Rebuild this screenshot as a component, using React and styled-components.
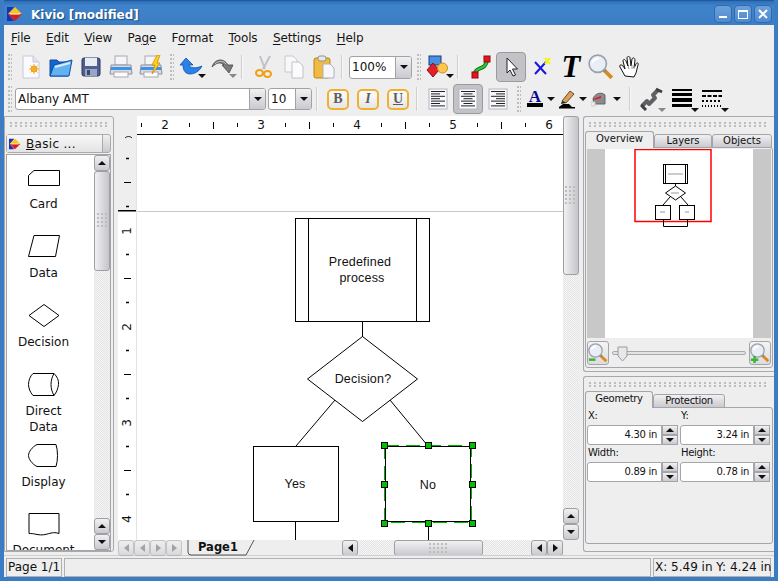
import styled, { createGlobalStyle } from "styled-components";

const GlobalStyle = createGlobalStyle`
  html, body { margin: 0; padding: 0; background: #eeeeee; }
  * { box-sizing: border-box; }
  body { font-family: "DejaVu Sans", sans-serif; font-size: 12px; color: #111; }
`;

const SCROLL_BG = "linear-gradient(#f1f1f3, #c9c9cf)";
const DOTS = "radial-gradient(circle at 1px 1px, #bdbdbd 1px, transparent 1.2px)";

const Win = styled.div`
  width: 778px;
  height: 581px;
  display: flex;
  flex-direction: column;
  background: #eeeeee;
  border: 4px solid #3b7cc2;
  border-top: 0;
  overflow: hidden;
`;

const TitleBar = styled.div`
  height: 25px;
  margin: 0 -4px;
  padding: 1px 6px 0 7px;
  flex: none;
  display: flex;
  align-items: center;
  background: linear-gradient(#2f6fb7, #3f83cb 20%, #3c7ec6);
  border-top: 1px solid #1f5a9e;
`;

const TitleText = styled.span`
  margin-left: 8px;
  padding-top: 2px;
  flex: 1;
  color: #fff;
  font-weight: bold;
  font-size: 12px;
  text-shadow: 1px 1px 1px #1c4a80;
`;

const WinBtn = styled.span`
  width: 18px;
  height: 18px;
  margin-left: 2px;
  display: flex;
  align-items: center;
  justify-content: center;
  background: linear-gradient(#6ba0da, #4f8ad0);
  border: 1px solid #2f6aad;
  border-radius: 4px;
`;

const MenuBar = styled.div`
  height: 25px;
  flex: none;
  display: flex;
  align-items: center;
  padding: 0 0 0 7px;
  gap: 15.4px;
`;

const MenuItem = styled.span`
  font-size: 12px;
  letter-spacing: -0.12px;
  color: #161616;
  u { text-decoration-thickness: 1px; text-underline-offset: 2px; }
`;

const ToolRow = styled.div`
  height: ${(p) => p.$h}px;
  flex: none;
  display: flex;
  align-items: center;
  padding-left: 4px;
`;

const ToolGrip = styled.span`
  width: 4px;
  height: 26px;
  flex: none;
  margin: 0 ${(p) => p.$r ?? 3}px 0 ${(p) => p.$l ?? 0}px;
  background: ${DOTS} 0 0 / 3px 4px;
`;

const ToolSep = styled.span`
  width: 2px;
  height: 24px;
  flex: none;
  margin: 0 ${(p) => p.$r ?? 6}px 0 ${(p) => p.$l ?? 6}px;
  background: #cfcfcf;
  border-right: 1px solid #f8f8f8;
`;

const ToolBtn = styled.span`
  position: relative;
  width: ${(p) => p.$w ?? 30}px;
  height: ${(p) => p.$h ?? 30}px;
  flex: none;
  display: flex;
  align-items: center;
  justify-content: center;
  border-radius: 4px;
  background: ${(p) => (p.$on ? "#c3c3c7" : "transparent")};
  border: 1px solid ${(p) => (p.$on ? "#9b9b9f" : "transparent")};
`;

const Caret = styled.span`
  width: 0;
  height: 0;
  flex: none;
  border-left: 4px solid transparent;
  border-right: 4px solid transparent;
  border-top: 4px solid ${(p) => p.$c ?? "#111"};
`;

const CornerCaret = styled(Caret)`
  position: absolute;
  right: ${(p) => p.$right ?? 0}px;
  bottom: ${(p) => p.$bottom ?? 2}px;
`;

const Combo = styled.span`
  width: ${(p) => p.$w}px;
  height: ${(p) => p.$h}px;
  flex: none;
  display: flex;
  margin-left: ${(p) => p.$ml ?? 0}px;
  background: #fff;
  border: 1px solid #a2a2a6;
  border-radius: 3px;
  overflow: hidden;
`;

const ComboText = styled.span`
  flex: 1;
  padding-left: 2px;
  font-size: 12px;
  line-height: ${(p) => p.$lh}px;
  white-space: nowrap;
`;

const ComboBtn = styled.span`
  width: 16px;
  flex: none;
  display: flex;
  align-items: center;
  justify-content: center;
  background: ${SCROLL_BG};
  border-left: 1px solid #a2a2a6;
`;

const FormatBtn = styled.span`
  width: 22px;
  height: 21px;
  flex: none;
  margin-right: ${(p) => p.$r ?? 8}px;
  display: flex;
  align-items: center;
  justify-content: center;
  background: linear-gradient(#fdfdfd, #e6e6e6);
  border: 2px solid #f0b030;
  border-radius: 5px;
  font-family: "Liberation Serif", serif;
  font-weight: bold;
  font-size: 14px;
  color: #5e5e5e;
  font-style: ${(p) => (p.$i ? "italic" : "normal")};
  text-decoration: ${(p) => (p.$u ? "underline" : "none")};
`;

const Main = styled.div`
  flex: 1;
  min-height: 0;
  display: flex;
  padding-top: 2px;
`;

const LeftDock = styled.div`
  width: 110px;
  height: 436px;
  flex: none;
  padding: 0 2px 0 1px;
  border: 1px solid #a9a9ad;
  border-radius: 0 3px 3px 0;
  display: flex;
  flex-direction: column;
`;

const DockGrip = styled.div`
  height: 5px;
  flex: none;
  margin: ${(p) => p.$mt ?? 5}px 4px ${(p) => p.$mb ?? 7}px;
  background: ${DOTS} 0 0 / 5px 3px;
`;

const StencilHead = styled.div`
  height: 19px;
  flex: none;
  display: flex;
  background: ${SCROLL_BG};
  border: 1px solid #aaa;
  border-radius: 3px;
`;

const StencilTitle = styled.span`
  flex: 1;
  display: flex;
  align-items: center;
  gap: 5px;
  padding-left: 2px;
  border-right: 1px solid #aaa;
  font-size: 12px;
  background: linear-gradient(#f7f7f7, #e4e4e4);
  letter-spacing: 0.3px;
`;

const StencilEnd = styled.span`
  width: 7px;
  flex: none;
`;

const StencilBody = styled.div`
  flex: 1;
  min-height: 0;
  margin-top: 1px;
  display: flex;
  background: #fff;
  border: 1px solid #a5a5a9;
  overflow: hidden;
`;

const StencilList = styled.div`
  flex: 1;
  min-width: 0;
  padding-top: 2px;
  overflow: hidden;
`;

const Stencil = styled.div`
  height: 69px;
  display: flex;
  flex-direction: column;
  align-items: center;
  padding-top: ${(p) => p.$pt}px;
  padding-right: 14px;
  font-size: 12px;
  line-height: 16px;
  text-align: center;
  svg { margin-bottom: ${(p) => p.$gap}px; flex: none; }
`;

const VScroll = styled.div`
  width: 16px;
  flex: none;
  display: flex;
  flex-direction: column;
  background: repeating-conic-gradient(#e3e3e3 0 25%, #f6f6f6 0 50%) 0 0 / 2px 2px;
`;

const HScrollTrack = styled.div`
  flex: 1;
  display: flex;
  background: repeating-conic-gradient(#e3e3e3 0 25%, #f6f6f6 0 50%) 0 0 / 2px 2px;
`;

const ScrollBtn = styled.span`
  width: 16px;
  height: 16px;
  flex: none;
  display: flex;
  align-items: center;
  justify-content: center;
  background: ${SCROLL_BG};
  border: 1px solid #a0a0a4;
  border-radius: 3px;
  opacity: ${(p) => (p.$dim ? 0.55 : 1)};
`;

const Thumb = styled.span`
  flex: none;
  display: flex;
  align-items: center;
  justify-content: center;
  width: ${(p) => (p.$horizontal ? `${p.$size}px` : "auto")};
  height: ${(p) => (p.$horizontal ? "auto" : `${p.$size}px`)};
  margin-left: ${(p) => p.$ml ?? 0}px;
  background: ${(p) =>
    p.$horizontal ? SCROLL_BG : "linear-gradient(90deg, #f1f1f3, #c4c4ca)"};
  border: 1px solid #a0a0a4;
  border-radius: 3px;
`;

const ThumbGrip = styled.span`
  width: ${(p) => p.$w}px;
  height: ${(p) => p.$h}px;
  background: ${DOTS} 0 0 / 4px 4px;
`;

const Spring = styled.span`
  flex: 1;
`;

const Center = styled.div`
  width: 461px;
  flex: none;
  margin-left: 4px;
  display: grid;
  grid-template-columns: 19px 426px 16px;
  grid-template-rows: 19px 405px 16px;
`;

const RulerCorner = styled.div`
  background: #eeeeee;
`;

const TopRuler = styled.div`
  background: #fff;
  border-bottom: 1px solid #000;
`;

const LeftRuler = styled.div`
  background: linear-gradient(#eeeeee 76px, #fff 76px);
  border-right: 1px solid #e4e4e4;
`;

const Sheet = styled.div`
  background: #fff;
  overflow: hidden;
`;

const VScrollSpan = styled(VScroll)`
  grid-column: 3;
  grid-row: 1 / 3;
`;

const BottomBar = styled.div`
  grid-column: 1 / 3;
  display: flex;
  align-items: stretch;
`;

const PageNav = styled.div`
  width: 66px;
  flex: none;
  display: flex;
`;

const PageTab = styled.div`
  position: relative;
  width: 68px;
  margin-left: 2px;
  flex: none;
  padding-left: 12px;
  font-weight: bold;
  font-size: 11.5px;
  line-height: 14px;
  svg { position: absolute; left: 0; top: 0; }
`;

const HScroll = styled.div`
  width: 221px;
  flex: none;
  display: flex;
`;

const RightDock = styled.div`
  width: 191px;
  margin-left: 4px;
  flex: none;
  display: flex;
  flex-direction: column;
  gap: 4px;
`;

const Dock = styled.div`
  height: ${(p) => p.$h}px;
  flex: none;
  padding: 0 1px;
  display: flex;
  flex-direction: column;
  border: 1px solid #a9a9ad;
  border-radius: 3px 0 0 3px;
  border-right: 0;
`;

const TabRow = styled.div`
  height: 17px;
  flex: none;
  display: flex;
  align-items: flex-end;
  position: relative;
  z-index: 1;
  margin-bottom: -1px;
`;

const Tab = styled.span`
  width: ${(p) => p.$w}px;
  height: ${(p) => (p.$active ? 17 : 14)}px;
  padding-bottom: ${(p) => (p.$active ? 4 : 2)}px;
  flex: none;
  display: flex;
  align-items: center;
  justify-content: center;
  font-size: 10px;
  letter-spacing: ${(p) => (p.$tight ? "-0.3px" : "0")};
  background: ${(p) => (p.$active ? "#eeeeee" : SCROLL_BG)};
  border: 1px solid #a5a5a9;
  border-bottom: ${(p) => (p.$active ? "0" : "1px solid #a5a5a9")};
  border-radius: 3px 3px 0 0;
`;

const TabPanel = styled.div`
  flex: 1;
  min-height: 0;
  padding: ${(p) => p.$pt ?? 1}px 1px 1px;
  display: flex;
  flex-direction: column;
  border: 1px solid #a5a5a9;
  border-radius: 0 3px 3px 3px;
  margin-bottom: ${(p) => p.$mb ?? 3}px;
`;

const Preview = styled.div`
  height: 189px;
  flex: none;
  padding: 0 18px;
  background: #c8c8c8;
`;

const PreviewPage = styled.div`
  height: 100%;
  background: #fff;
`;

const ZoomRow = styled.div`
  flex: 1;
  display: flex;
  align-items: center;
  gap: 3px;
  padding-top: 1px;
`;

const ZoomBtn = styled.span`
  width: 22px;
  height: 24px;
  flex: none;
  display: flex;
  align-items: center;
  justify-content: center;
  background: linear-gradient(#f4f4f4, #dcdcdc);
  border: 1px solid #a5a5a9;
  border-radius: 3px;
`;

const SliderWrap = styled.span`
  position: relative;
  flex: 1;
  height: 4px;
  background: #e4e4e4;
  border: 1px solid #a9a9ad;
  border-radius: 2px;
  svg { position: absolute; left: 4px; top: -6px; }
`;

const GeoGrid = styled.div`
  display: grid;
  grid-template-columns: 91px 90px;
  column-gap: 2px;
`;

const FieldBlock = styled.div`
  display: flex;
  flex-direction: column;
`;

const FieldLabel = styled.label`
  height: 17px;
  font-size: 10px;
  letter-spacing: -0.3px;
  line-height: 15px;
  padding-left: 1px;
`;

const Spin = styled.div`
  height: 20px;
  display: flex;
`;

const SpinValue = styled.span`
  flex: 1;
  padding-right: 4px;
  background: #fff;
  border: 1px solid #a5a5a9;
  border-radius: 3px 0 0 3px;
  font-size: 10px;
  letter-spacing: -0.3px;
  line-height: 18px;
  text-align: right;
`;

const SpinArrows = styled.span`
  width: 16px;
  flex: none;
  display: flex;
  flex-direction: column;
`;

const SpinBtn = styled.span`
  flex: 1;
  display: flex;
  align-items: center;
  justify-content: center;
  background: ${SCROLL_BG};
  border: 1px solid #a5a5a9;
`;

const StatusBar = styled.div`
  height: 22px;
  flex: none;
  display: flex;
  gap: 2px;
  padding: 2px 3px 0 2px;
  margin-top: 1px;
  border-top: 1px solid #d0d0d0;
`;

const StatusCell = styled.span`
  width: ${(p) => (p.$w ? `${p.$w}px` : "auto")};
  flex: ${(p) => (p.$w ? "none" : 1)};
  border: 1px solid #b0b0b4;
  padding-left: 1px;
  font-size: 12px;
  line-height: 16px;
  white-space: nowrap;
`;

const UpTri = styled(Caret)`
  border-top: 0;
  border-bottom: 4px solid #111;
`;

const LeftTri = styled.span`
  width: 0;
  height: 0;
  border-top: 4px solid transparent;
  border-bottom: 4px solid transparent;
  border-right: 5px solid ${(p) => p.$c ?? "#111"};
`;

const RightTri = styled.span`
  width: 0;
  height: 0;
  border-top: 4px solid transparent;
  border-bottom: 4px solid transparent;
  border-left: 5px solid ${(p) => p.$c ?? "#111"};
`;

function Logo({ size = 16 }) {
  return (
    <svg width={size} height={size} viewBox="0 0 16 16">
      <path d="M0 1h7L1 8l6 7H0z" fill="#1c2fb8" />
      <path d="M8 1l7 7H1z" fill="#f5c518" />
      <path d="M1 8h14l-7 7z" fill="#d81e1e" />
      <path d="M3 8h10" stroke="#fff" strokeWidth="1" />
    </svg>
  );
}

const I = ({ s = 24, children }) => (
  <svg width={s} height={s} viewBox="0 0 24 24">
    {children}
  </svg>
);

const NewIcon = () => (
  <I>
    <path d="M4 1h10l6 6v16H4z" fill="#fbfbff" stroke="#c6c9d8" />
    <path d="M14 1v6h6" fill="#dfe3f0" stroke="#c6c9d8" />
    <circle cx="15" cy="14" r="3" fill="#ffc13a" stroke="#ef9a1a" />
    <path d="M15 9v10M10 14h10M11.500 10.500l7 7M18.500 10.500l-7 7" stroke="#f4a826" />
  </I>
);
const OpenIcon = () => (
  <I>
    <path d="M1 5h7l2 2h9v14H1z" fill="#1764cc" stroke="#0d4ca8" />
    <path d="M5 10l18-5-3 16H1z" fill="#62b2f2" stroke="#0d4ca8" />
    <path d="M6 12l15-4" stroke="#d4edff" strokeWidth="2" />
  </I>
);
const SaveIcon = () => (
  <I>
    <rect x="3" y="3" width="18" height="18" rx="2" fill="#4f5e8f" stroke="#2c3560" />
    <rect x="6" y="3" width="12" height="8" fill="#e8ebf2" />
    <rect x="6" y="14" width="12" height="7" fill="#9aa4c4" />
    <rect x="8" y="15" width="3" height="5" fill="#3b466e" />
  </I>
);
const PrintIcon = ({ bolt }) => (
  <I>
    <rect x="6" y="1" width="12" height="9" fill="#f6f6f8" stroke="#a9a9b0" />
    <path d="M2 10h20l1 9H1z" fill="#d9dbe0" stroke="#8f9299" />
    <rect x="2" y="12" width="20" height="3" fill="#3c93e8" />
    <rect x="5" y="17" width="14" height="5" fill="#fbfbfb" stroke="#a9a9b0" />
    {bolt && (
      <path d="M18 0l-5 10h3l-3 9 8-11h-3l3-8z" fill="#ffd21f" stroke="#d08a08" strokeWidth=".8" />
    )}
  </I>
);
const UndoIcon = () => (
  <I>
    <path
      d="M0 10L6 3l7 7H9c1 3 6 4 13 1-3 6-8 8-12 8-4 0-7-3-7-9z"
      fill="#2a82e4"
      stroke="#0f50b0"
      strokeWidth=".8"
    />
  </I>
);
const RedoIcon = () => (
  <I>
    <path
      d="M1 12C4 3 13 3 17 10h5l-4 8-7-8h2c-3-3-7-3-12 2z"
      fill="#7a7a7a"
      stroke="#444"
      strokeWidth=".8"
    />
    <path d="M4 9c3-3 8-4 11 0" stroke="#c4c4c4" fill="none" />
  </I>
);
const CutIcon = () => (
  <I>
    <path d="M11 14L18 1M13 14L8 1" stroke="#c0c0c8" strokeWidth="2" fill="none" />
    <ellipse cx="7.500" cy="18" rx="3.500" ry="3" fill="none" stroke="#f0a010" strokeWidth="2" />
    <ellipse cx="15.500" cy="19" rx="3.500" ry="3" fill="none" stroke="#f0a010" strokeWidth="2" />
  </I>
);
const CopyIcon = () => (
  <I>
    <path d="M3 1h8l4 4v12H3z" fill="#f8f8fa" stroke="#c8c8d0" />
    <path d="M10 7h7l4 4v12H10z" fill="#fbfbfd" stroke="#c0c0c8" />
  </I>
);
const PasteIcon = () => (
  <I>
    <rect x="2" y="3" width="16" height="20" rx="2" fill="#f0bb40" stroke="#b88416" />
    <rect x="6" y="1" width="8" height="5" rx="2" fill="#e8e8e8" stroke="#909090" />
    <path d="M11 9h7l4 4v10H11z" fill="#f8f8fc" stroke="#b0b0bc" />
  </I>
);
const ShapesIcon = () => (
  <I>
    <rect x="3" y="1" width="12" height="9" fill="#4a90e0" stroke="#123c88" />
    <path d="M7 8l6 7-6 7-6-7z" fill="#e0202a" stroke="#901018" />
    <circle cx="16.500" cy="13" r="5" fill="#ffc84a" stroke="#d08a10" />
  </I>
);
const ConnectorIcon = () => (
  <I>
    <path d="M6 19c0-8 11-3 12-14" fill="none" stroke="#0c7a12" strokeWidth="4" />
    <path d="M6 19c0-8 11-3 12-14" fill="none" stroke="#38c23e" strokeWidth="2" />
    <rect x="15" y="1" width="6" height="6" fill="#e8141c" stroke="#8a0a10" />
    <rect x="3" y="17" width="6" height="6" fill="#e8141c" stroke="#8a0a10" />
  </I>
);
const PointerIcon = () => (
  <I>
    <path d="M8 3v15l3-3 3 6 2.500-1-3-6h5z" fill="#fff" stroke="#222" strokeLinejoin="round" />
  </I>
);
const CrossIcon = () => (
  <I>
    <path d="M6 7l11 12M17 7L6 19" stroke="#1414e8" strokeWidth="2" />
    <path d="M16 3l5 6M21 3l-5 6" stroke="#f4f414" strokeWidth="2" />
  </I>
);
const TextToolIcon = () => (
  <svg width="30" height="38" viewBox="0 0 30 38">
    <text x="15" y="30" textAnchor="middle" fontFamily="Liberation Serif" fontWeight="bold" fontStyle="italic" fontSize="33" fill="#000">
      T
    </text>
  </svg>
);
const LensIcon = ({ s = 26, mark }) => (
  <I s={s}>
    <path d="M14 14l8 8" stroke="#d88a20" strokeWidth="3.500" />
    <path d="M13 13l3 3" stroke="#888" strokeWidth="3" />
    <circle cx="9" cy="9" r="8" fill="#e8eef6" stroke="#9aa0aa" strokeWidth="1.500" />
    <path d="M4 8c1-2 3-4 6-4" stroke="#fff" strokeWidth="2" fill="none" />
    {mark === "minus" && <path d="M1 20h8" stroke="#3cb43c" strokeWidth="3" />}
    {mark === "plus" && <path d="M1 20h9M5.500 15.500v9" stroke="#3cb43c" strokeWidth="3" />}
  </I>
);
const HandIcon = () => (
  <I>
    <path
      d="M6 21L1 12c-1-2 1-3 3-1l2 3-2-8c0-2 2-2 3 0l2 5-1-8c0-2 3-2 3 0l1 8 1-7c1-2 3-1 3 1l-1 8 2-4c1-2 3-1 2 1l-2 8-2 4z"
      fill="#fff"
      stroke="#111"
      strokeLinejoin="round"
    />
    <path d="M9 11l1 3M13 10v4M16 11l-1 3" stroke="#999" />
  </I>
);
const AlignIcon = ({ mode }) => {
  const rows = [14, 9, 14, 9, 14, 9, 14];
  return (
    <I>
      <rect x="3" y="2" width="18" height="20" fill="#f8f9fd" stroke="#b4b6c2" />
      {rows.map((w, n) => {
        const x = mode === "left" ? 5 : mode === "right" ? 19 - w : 12 - w / 2;
        return <rect key={n} x={x} y={4 + n * 2.4} width={w} height="1" fill="#222" />;
      })}
    </I>
  );
};
const FontColorIcon = () => (
  <svg width="16" height="22" viewBox="0 0 16 22">
    <text x="8" y="14" textAnchor="middle" fontFamily="Liberation Serif" fontWeight="bold" fontSize="17" fill="#0a0a90">
      A
    </text>
    <rect x="0" y="15" width="16" height="4" fill="#000" />
  </svg>
);
const PenColorIcon = () => (
  <svg width="16" height="22" viewBox="0 0 16 22">
    <path d="M3 13L11 3l4 3-8 9z" fill="#d9a060" stroke="#6a4a20" />
    <path d="M3 13l4 2-5 1z" fill="#222" />
    <path d="M0 19l4-3h6l3 3z" fill="#000" />
    <rect x="0" y="19" width="16" height="1.500" fill="#000" />
  </svg>
);
const FillIcon = () => (
  <svg width="16" height="20" viewBox="0 0 16 20">
    <path d="M2 10c1-5 8-8 12-4v9H3z" fill="#8a8a90" stroke="#666" />
    <path d="M2 10l8-3v2l-7 2z" fill="#e01c1c" />
    <path d="M0 13h4v4H0z" fill="#eee" stroke="#ccc" />
  </svg>
);
const LineToolIcon = () => (
  <I>
    <path d="M2 19l5-5 2 3 6-6-2-3 5-5" fill="none" stroke="#606064" strokeWidth="4" strokeLinejoin="round" />
    <path d="M1 18l5 5M16 2l6 3" stroke="#404044" strokeWidth="3" />
  </I>
);
const LineWidthIcon = () => (
  <I>
    <rect x="2" y="2" width="20" height="2" fill="#000" />
    <rect x="2" y="6" width="20" height="3" fill="#000" />
    <rect x="2" y="11" width="20" height="4" fill="#000" />
    <rect x="2" y="17" width="20" height="3" fill="#000" />
  </I>
);
const LineDashIcon = () => (
  <I>
    <rect x="2" y="3" width="20" height="2" fill="#000" />
    <path d="M2 9h20" stroke="#000" strokeWidth="2" strokeDasharray="4 1.500" />
    <path d="M2 14h20" stroke="#000" strokeWidth="2" strokeDasharray="2 2" />
    <path d="M2 19h20" stroke="#000" strokeWidth="2" strokeDasharray="1 2" />
  </I>
);

const StencilShape = ({ h = 23, children }) => (
  <svg width="32" height={h} viewBox={`0 0 32 ${h}`} fill="#fff" stroke="#000">
    {children}
  </svg>
);

function RulerTop() {
  const ticks = [];
  for (let i = 0; i < 18; i++) {
    const x = 4.5 + i * 24;
    const q = i % 4;
    if (q === 1) continue;
    ticks.push(<line key={i} x1={x} x2={x} y1={q === 3 ? 6 : 7} y2={q === 3 ? 13 : 11} stroke="#000" />);
  }
  return (
    <svg width="426" height="18">
      {ticks}
      {[2, 3, 4, 5, 6].map((n, i) => (
        <text key={n} x={28 + i * 96} y="13" textAnchor="middle" fontFamily="DejaVu Sans" fontSize="12" fill="#111">
          {n}
        </text>
      ))}
    </svg>
  );
}

function RulerLeft() {
  const ticks = [];
  for (let i = 1; i < 17; i++) {
    const q = i % 4;
    const y = i * 24 - 0.5;
    if (q === 0) continue;
    ticks.push(<line key={i} x1={q === 2 ? 6 : 8} x2={q === 2 ? 13 : 11} y1={y} y2={y} stroke="#000" strokeWidth={q === 2 ? 1 : 1.5} />);
  }
  return (
    <svg width="18" height="405">
      <rect x="0" y="75" width="18" height="1.500" fill="#000" />
      {ticks}
      {[1, 2, 3, 4].map((n) => (
        <text key={n} x="0" y="0" transform={`translate(13 ${n * 96}) rotate(-90)`} textAnchor="middle" fontFamily="DejaVu Sans" fontSize="12" fill="#111">
          {n}
        </text>
      ))}
      <path d="M7 3c2-2 5-2 7 0" fill="none" stroke="#111" />
    </svg>
  );
}

const HANDLES = [
  [247, 310], [291, 310], [335, 310],
  [247, 349], [335, 349],
  [247, 388], [291, 388], [335, 388],
];

const Label = ({ x, y, children }) => (
  <text x={x} y={y} textAnchor="middle" fontFamily="Liberation Sans" fontSize="12.5" letterSpacing="0.2" fill="#111">
    {children}
  </text>
);

// coordinates here are sheet coordinates, the origin is the ruler corner
function Diagram() {
  return (
    <svg width="426" height="405" viewBox="0 0 426 405" fill="none" stroke="#000" shapeRendering="crispEdges">
      <rect x="0" y="76" width="426" height="1" fill="#c9c9c9" stroke="none" />
      <rect x="158.500" y="83.500" width="134" height="103" />
      <path d="M171.500 83.500v103M279.500 83.500v103M225.500 186.500v15" />
      <g shapeRendering="auto">
        <path d="M225.500 201.500l55 42.500-55 42.500-55-42.500z" />
        <path d="M198 265l-39 46M253 265l38 46" />
      </g>
      <rect x="116.500" y="311.500" width="85" height="75" />
      <path d="M158.500 386.500V405M291.500 387V405" />
      <rect x="248.500" y="311.500" width="85" height="75" />
      <rect x="247.500" y="310.500" width="87" height="77" stroke="#00b000" strokeDasharray="14 7" />
      {HANDLES.map(([x, y]) => (
        <rect key={`${x}-${y}`} x={x - 2.5} y={y - 2.5} width="6" height="6" fill="#00c000" />
      ))}
      <g stroke="none" shapeRendering="auto">
        <Label x="223" y="131">Predefined</Label>
        <Label x="225" y="147">process</Label>
        <Label x="226" y="248">Decision?</Label>
        <Label x="158" y="353">Yes</Label>
        <Label x="291" y="354">No</Label>
      </g>
    </svg>
  );
}

function MiniDiagram() {
  return (
    <svg width="147" height="189" viewBox="605 149 147 189" fill="none" stroke="#000">
      <rect x="635" y="149.500" width="76" height="72" stroke="#f00" strokeWidth="1.500" />
      <rect x="663.500" y="164.500" width="24" height="19" />
      <path d="M665.500 164v19M685.500 164v19M675.500 183v3" />
      <path d="M675.500 186l10 7-10 7-10-7z" />
      <path d="M670 197l-7 8M681 197l7 8" />
      <rect x="655.500" y="205.500" width="15" height="14" />
      <rect x="679.500" y="205.500" width="15" height="14" />
      <path d="M663.500 219v7.500h24V219" />
      <path d="M668 174h15M671 193h8M660 212h5M685 212h4" stroke="#999" />
    </svg>
  );
}

function SpinField({ value }) {
  return (
    <Spin>
      <SpinValue>{value}</SpinValue>
      <SpinArrows>
        <SpinBtn><UpTri /></SpinBtn>
        <SpinBtn><Caret /></SpinBtn>
      </SpinArrows>
    </Spin>
  );
}

const MENUS = [
  ["F", "ile"], ["E", "dit"], ["V", "iew"], ["Pa", "ge", 1], ["F", "ormat", 2],
  ["T", "ools"], ["S", "ettings"], ["H", "elp"],
];

export default function App() {
  return (
    <Win>
      <GlobalStyle />
      <TitleBar>
        <Logo />
        <TitleText>Kivio [modified]</TitleText>
        <WinBtn>
          <svg width="10" height="10"><rect x="1" y="7" width="8" height="2" fill="#fff" /></svg>
        </WinBtn>
        <WinBtn>
          <svg width="10" height="10"><rect x=".5" y="1.500" width="9" height="8" fill="none" stroke="#fff" /><rect x="1" y="1" width="8" height="2" fill="#fff" /></svg>
        </WinBtn>
        <WinBtn>
          <svg width="10" height="10"><path d="M1 1l8 8M9 1L1 9" stroke="#fff" strokeWidth="2" /></svg>
        </WinBtn>
      </TitleBar>

      <MenuBar>
        {MENUS.map(([a, b, mode]) => (
          <MenuItem key={a + b}>
            {mode === 1 ? <>Pa<u>g</u>e</> : mode === 2 ? <>F<u>o</u>rmat</> : <><u>{a}</u>{b}</>}
          </MenuItem>
        ))}
      </MenuBar>

      <ToolRow $h={34}>
        <ToolGrip $r={4} />
        <ToolBtn><NewIcon /></ToolBtn>
        <ToolBtn><OpenIcon /></ToolBtn>
        <ToolBtn><SaveIcon /></ToolBtn>
        <ToolBtn><PrintIcon /></ToolBtn>
        <ToolBtn><PrintIcon bolt /></ToolBtn>
        <ToolGrip $l={4} $r={2} />
        <ToolBtn $w={32}><UndoIcon /><CornerCaret $right={1} $bottom={3} /></ToolBtn>
        <ToolBtn $w={30}><RedoIcon /><CornerCaret $c="#888" $right={0} $bottom={3} /></ToolBtn>
        <ToolSep $l={3} $r={6} />
        <ToolBtn><CutIcon /></ToolBtn>
        <ToolBtn><CopyIcon /></ToolBtn>
        <ToolBtn><PasteIcon /></ToolBtn>
        <ToolSep $l={2} $r={6} />
        <Combo $w={63} $h={23}>
          <ComboText $lh={21}>100%</ComboText>
          <ComboBtn><Caret /></ComboBtn>
        </Combo>
        <ToolGrip $l={5} $r={2} />
        <ToolBtn $w={30}><ShapesIcon /><CornerCaret $right={-2} $bottom={3} /></ToolBtn>
        <ToolSep $l={4} $r={7} />
        <ToolBtn $w={30}><ConnectorIcon /></ToolBtn>
        <ToolBtn $on $w={30}><PointerIcon /></ToolBtn>
        <ToolBtn><CrossIcon /></ToolBtn>
        <ToolBtn><TextToolIcon /></ToolBtn>
        <ToolBtn><LensIcon /></ToolBtn>
        <ToolBtn><HandIcon /></ToolBtn>
      </ToolRow>

      <ToolRow $h={30}>
        <ToolGrip $r={3} />
        <Combo $w={251} $h={22}>
          <ComboText $lh={20}>Albany AMT</ComboText>
          <ComboBtn><Caret /></ComboBtn>
        </Combo>
        <Combo $w={44} $h={22} $ml={2}>
          <ComboText $lh={20}>10</ComboText>
          <ComboBtn><Caret /></ComboBtn>
        </Combo>
        <ToolSep $l={4} $r={9} />
        <FormatBtn>B</FormatBtn>
        <FormatBtn $i>I</FormatBtn>
        <FormatBtn $u $r={7}>U</FormatBtn>
        <ToolSep $l={0} $r={5} />
        <ToolBtn><AlignIcon mode="left" /></ToolBtn>
        <ToolBtn $on><AlignIcon mode="center" /></ToolBtn>
        <ToolBtn><AlignIcon mode="right" /></ToolBtn>
        <ToolGrip $l={4} $r={6} />
        <FontColorIcon />
        <ToolBtn $w={16} $h={16}><Caret /></ToolBtn>
        <PenColorIcon />
        <ToolBtn $w={16} $h={16}><Caret /></ToolBtn>
        <FillIcon />
        <ToolBtn $w={20} $h={16}><Caret /></ToolBtn>
        <ToolSep $l={2} $r={6} />
        <ToolBtn $w={30}><LineToolIcon /><CornerCaret $c="#888" $right={0} $bottom={1} /></ToolBtn>
        <ToolBtn $w={30}><LineWidthIcon /><CornerCaret $right={-3} $bottom={1} /></ToolBtn>
        <ToolBtn $w={30}><LineDashIcon /><CornerCaret $right={-3} $bottom={1} /></ToolBtn>
      </ToolRow>

      <Main>
        <LeftDock>
          <DockGrip />
          <StencilHead>
            <StencilTitle>
              <Logo size={12} />
              <span><u>B</u>asic ...</span>
            </StencilTitle>
            <StencilEnd />
          </StencilHead>
          <StencilBody>
            <StencilList>
              <Stencil $pt={13} $gap={10}>
                <StencilShape h={16}><path d="M6 .5h25.500v15H.5v-10z" /></StencilShape>
                Card
              </Stencil>
              <Stencil $pt={9} $gap={8}>
                <StencilShape h={22}><path d="M6 .5h25.500l-4 21H.5z" /></StencilShape>
                Data
              </Stencil>
              <Stencil $pt={9} $gap={7}>
                <StencilShape><path d="M16 .5l15 11-15 11-15-11z" /></StencilShape>
                Decision
              </Stencil>
              <Stencil $pt={9} $gap={7}>
                <StencilShape>
                  <path d="M5 .5h21c3 3 5 7 4.500 11-.5 4-2 8-4.500 11H5C2 19 .5 15 .5 11.500S2 3 5 .5z" />
                  <path d="M26 .5c-4 7-4 15 0 22" fill="none" />
                </StencilShape>
                Direct
                <br />
                Data
              </Stencil>
              <Stencil $pt={11} $gap={7}>
                <StencilShape><path d="M9 .5h19c2 6 2 16 0 22H9C4 20 .5 15 .5 11.500S4 3 9 .5z" /></StencilShape>
                Display
              </Stencil>
              <Stencil $pt={11} $gap={6}>
                <StencilShape><path d="M1 .5h30v20c-8-3-12 3-22 1-4-1-6-1-8-1z" /></StencilShape>
                Document
              </Stencil>
            </StencilList>
            <VScroll>
              <ScrollBtn><UpTri /></ScrollBtn>
              <Thumb $size={100}><ThumbGrip $w={10} $h={16} /></Thumb>
              <Spring />
              <ScrollBtn><UpTri /></ScrollBtn>
              <ScrollBtn><Caret /></ScrollBtn>
            </VScroll>
          </StencilBody>
        </LeftDock>

        <Center>
          <RulerCorner />
          <TopRuler><RulerTop /></TopRuler>
          <VScrollSpan>
            <Thumb $size={159}><ThumbGrip $w={12} $h={20} /></Thumb>
            <Spring />
            <ScrollBtn><UpTri /></ScrollBtn>
            <ScrollBtn><Caret /></ScrollBtn>
          </VScrollSpan>
          <LeftRuler><RulerLeft /></LeftRuler>
          <Sheet><Diagram /></Sheet>
          <BottomBar>
            <PageNav>
              <ScrollBtn $dim><LeftTri $c="#666" /></ScrollBtn>
              <ScrollBtn $dim><LeftTri $c="#666" /></ScrollBtn>
              <ScrollBtn $dim><RightTri $c="#666" /></ScrollBtn>
              <ScrollBtn $dim><RightTri $c="#666" /></ScrollBtn>
            </PageNav>
            <PageTab>
              <svg width="70" height="16" fill="none" stroke="#555">
                <path d="M2 0v12q0 3 3 3h55l8-15" />
              </svg>
              Page1
            </PageTab>
            <Spring />
            <HScroll>
              <ScrollBtn><LeftTri /></ScrollBtn>
              <HScrollTrack>
                <Thumb $horizontal $size={89} $ml={36}><ThumbGrip $w={20} $h={10} /></Thumb>
              </HScrollTrack>
              <ScrollBtn><LeftTri /></ScrollBtn>
              <ScrollBtn><RightTri /></ScrollBtn>
            </HScroll>
          </BottomBar>
        </Center>

        <RightDock>
          <Dock $h={256}>
            <DockGrip $mb={4} />
            <TabRow>
              <Tab $active $w={69}>Overview</Tab>
              <Tab $w={58}>Layers</Tab>
              <Tab $w={60}>Objects</Tab>
            </TabRow>
            <TabPanel>
              <Preview>
                <PreviewPage><MiniDiagram /></PreviewPage>
              </Preview>
              <ZoomRow>
                <ZoomBtn><LensIcon s={20} mark="minus" /></ZoomBtn>
                <SliderWrap>
                  <svg width="11" height="16" viewBox="0 0 11 16">
                    <path d="M1 1h9v9l-4.500 5L1 10z" fill="#e8e8ea" stroke="#9a9a9e" />
                  </svg>
                </SliderWrap>
                <ZoomBtn><LensIcon s={20} mark="plus" /></ZoomBtn>
              </ZoomRow>
            </TabPanel>
          </Dock>
          <Dock $h={176}>
            <DockGrip $mb={4} />
            <TabRow>
              <Tab $active $tight $w={68}>Geometry</Tab>
              <Tab $tight $w={72}>Protection</Tab>
            </TabRow>
            <TabPanel $pt={0} $mb={7}>
              <GeoGrid>
                <FieldBlock>
                  <FieldLabel>X:</FieldLabel>
                  <SpinField value="4.30 in" />
                </FieldBlock>
                <FieldBlock>
                  <FieldLabel>Y:</FieldLabel>
                  <SpinField value="3.24 in" />
                </FieldBlock>
                <FieldBlock>
                  <FieldLabel>Width:</FieldLabel>
                  <SpinField value="0.89 in" />
                </FieldBlock>
                <FieldBlock>
                  <FieldLabel>Height:</FieldLabel>
                  <SpinField value="0.78 in" />
                </FieldBlock>
              </GeoGrid>
            </TabPanel>
          </Dock>
        </RightDock>
      </Main>

      <StatusBar>
        <StatusCell $w={56}>Page 1/1</StatusCell>
        <StatusCell />
        <StatusCell $w={118}>X: 5.49 in Y: 4.24 in</StatusCell>
      </StatusBar>
    </Win>
  );
}
